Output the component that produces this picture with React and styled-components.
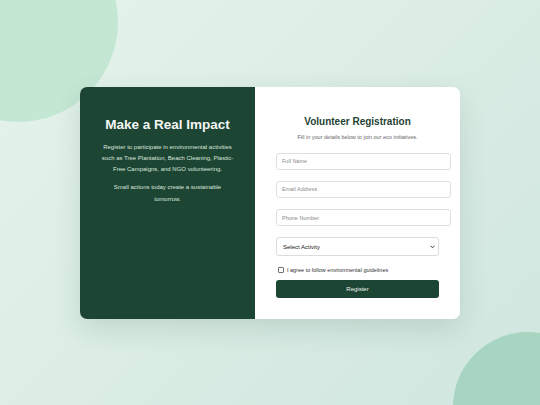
import React from 'react';
import styled, { createGlobalStyle } from 'styled-components';

const GlobalStyle = createGlobalStyle`
  html, body {
    margin: 0;
    padding: 0;
  }
  body {
    font-family: "Liberation Sans", Arial, sans-serif;
  }
  * {
    box-sizing: border-box;
  }
`;

const Page = styled.div`
  position: relative;
  width: 540px;
  height: 405px;
  overflow: hidden;
  display: flex;
  align-items: center;
  justify-content: center;
  background: linear-gradient(135deg, #e5f4eb 0%, #dbede5 50%, #cfe6df 100%);
`;

const Blob = styled.div`
  position: absolute;
  border-radius: 50%;
  background: ${p => p.color};
  width: ${p => p.size}px;
  height: ${p => p.size}px;
  left: ${p => p.x}px;
  top: ${p => p.y}px;
`;

const Card = styled.div`
  position: relative;
  display: flex;
  width: 380px;
  height: 232px;
  border-radius: 7px;
  overflow: hidden;
  background: #ffffff;
  box-shadow: 0 10px 28px rgba(30, 70, 50, 0.14);
`;

const InfoPanel = styled.div`
  width: 175px;
  flex-shrink: 0;
  background: #1d4533;
  color: #f2f5f3;
  padding: 29px 21px 0;
  text-align: center;
`;

const InfoTitle = styled.h1`
  margin: 0 0 9px;
  font-size: 13.5px;
  line-height: 17px;
  font-weight: 700;
  color: #f4f6f5;
`;

const InfoText = styled.p`
  margin: 0 0 7px;
  font-size: 6px;
  line-height: 11.3px;
  color: #d9e5de;
`;

const FormPanel = styled.div`
  flex: 1;
  padding: 28px 21px 0;
  display: flex;
  flex-direction: column;
`;

const FormTitle = styled.h2`
  margin: 0;
  text-align: center;
  font-size: 10px;
  line-height: 13px;
  font-weight: 700;
  color: #1f4433;
`;

const FormSubtitle = styled.p`
  margin: 5px 0 12px;
  text-align: center;
  font-size: 5.5px;
  line-height: 8px;
  color: #666;
`;

const Field = styled.input`
  box-sizing: content-box;
  width: 100%;
  height: 15.3px;
  margin: 0 0 11px;
  padding: 0 5px;
  border: 1px solid #e0e0e0;
  border-radius: 3px;
  font-family: "Liberation Sans", Arial, sans-serif;
  font-size: 5.5px;
  color: #333;
  outline: none;
  &::placeholder {
    color: #8a8a8a;
  }
`;

const SelectWrap = styled.div`
  position: relative;
  margin: 0 0 11px;
`;

const Select = styled.select`
  appearance: none;
  display: block;
  width: 100%;
  height: 19px;
  padding: 0 6px;
  border: 1px solid #dcdcdc;
  border-radius: 3px;
  background: #fff;
  font-family: "Liberation Sans", Arial, sans-serif;
  font-size: 6px;
  color: #1a1a1a;
  outline: none;
`;

const Chevron = styled.svg`
  position: absolute;
  right: 4px;
  top: 7.5px;
  width: 5px;
  height: 4px;
  pointer-events: none;
`;

const CheckRow = styled.label`
  display: flex;
  align-items: center;
  gap: 3px;
  margin: 0 0 7px 2px;
  font-size: 5.5px;
  color: #333;
`;

const Check = styled.input`
  appearance: none;
  width: 6px;
  height: 6px;
  margin: 0;
  border: 0.8px solid #6f6f6f;
  border-radius: 1px;
  background: #fff;
`;

const Button = styled.button`
  width: 100%;
  height: 17.5px;
  border: none;
  border-radius: 3px;
  background: #1d4533;
  color: #f0f3f1;
  font-family: "Liberation Sans", Arial, sans-serif;
  font-size: 6px;
  cursor: pointer;
`;

export default function App() {
  return (
    <Page>
      <GlobalStyle />
      <Blob color="#c4e7d4" size={200} x={-82} y={-78} />
      <Blob color="#a7d5c2" size={150} x={453} y={332} />
      <Card>
        <InfoPanel>
          <InfoTitle>Make a Real Impact</InfoTitle>
          <InfoText>
            Register to participate in environmental activities such as Tree
            Plantation, Beach Cleaning, Plastic-Free Campaigns, and NGO volunteering.
          </InfoText>
          <InfoText>Small actions today create a sustainable tomorrow.</InfoText>
        </InfoPanel>
        <FormPanel>
          <FormTitle>Volunteer Registration</FormTitle>
          <FormSubtitle>Fill in your details below to join our eco initiatives.</FormSubtitle>
          <Field type="text" placeholder="Full Name" />
          <Field type="email" placeholder="Email Address" />
          <Field type="tel" placeholder="Phone Number" />
          <SelectWrap>
            <Select defaultValue="">
              <option value="">Select Activity</option>
              <option>Tree Plantation</option>
              <option>Beach Cleaning</option>
              <option>Plastic-Free Campaign</option>
              <option>NGO Volunteering</option>
            </Select>
            <Chevron viewBox="0 0 10 7">
              <path d="M1.5 1.5 L5 5 L8.5 1.5" fill="none" stroke="#222" strokeWidth="1.8" strokeLinecap="round" strokeLinejoin="round" />
            </Chevron>
          </SelectWrap>
          <CheckRow>
            <Check type="checkbox" />
            I agree to follow environmental guidelines
          </CheckRow>
          <Button type="button">Register</Button>
        </FormPanel>
      </Card>
    </Page>
  );
}
